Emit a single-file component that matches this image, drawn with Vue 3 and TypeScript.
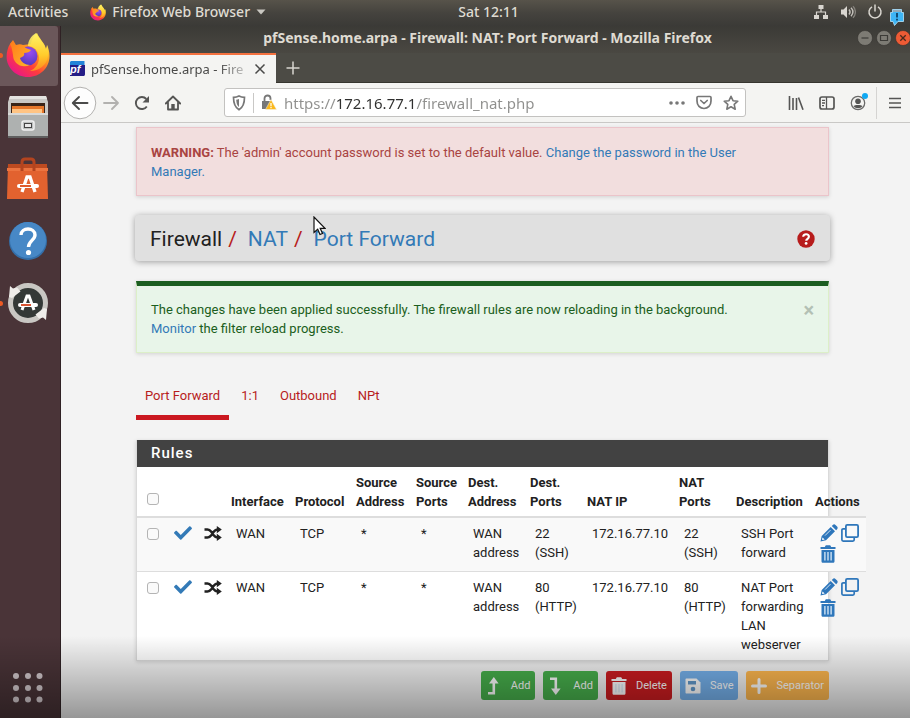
<script setup lang="ts">
import { ref } from 'vue'

interface Rule {
  id: number
  iface: string
  protocol: string
  srcAddr: string
  srcPorts: string
  destAddr: string
  destPorts: string
  natIp: string
  natPorts: string
  description: string
  selected: boolean
}

const tabs = ['Port Forward', '1:1', 'Outbound', 'NPt']
const activeTab = ref('Port Forward')
const noticeOpen = ref(true)
const allSelected = ref(false)
const url = ref('https://172.16.77.1/firewall_nat.php')

const headings = ['Interface', 'Protocol', 'Source Address', 'Source Ports', 'Dest. Address', 'Dest. Ports', 'NAT IP', 'NAT Ports', 'Description', 'Actions']

const rules = ref<Rule[]>([
  {
    id: 0, iface: 'WAN', protocol: 'TCP', srcAddr: '*', srcPorts: '*', destAddr: 'WAN address',
    destPorts: '22 (SSH)', natIp: '172.16.77.10', natPorts: '22 (SSH)', description: 'SSH Port forward', selected: false,
  },
  {
    id: 1, iface: 'WAN', protocol: 'TCP', srcAddr: '*', srcPorts: '*', destAddr: 'WAN address',
    destPorts: '80 (HTTP)', natIp: '172.16.77.10', natPorts: '80 (HTTP)', description: 'NAT Port forwarding LAN webserver', selected: false,
  },
])

function toggleAll() {
  rules.value.forEach((r) => { r.selected = allSelected.value })
}
</script>

<template>
  <div class="desktop">
    <svg class="sprite" width="0" height="0" aria-hidden="true">
      <defs>
        <linearGradient id="ffBody" x1="0.85" y1="0.1" x2="0.2" y2="0.95">
          <stop offset="0" stop-color="#fff04a" />
          <stop offset="0.35" stop-color="#ff9a1f" />
          <stop offset="0.65" stop-color="#ff3d3a" />
          <stop offset="1" stop-color="#e8178a" />
        </linearGradient>
        <linearGradient id="ffFlame" x1="0.5" y1="0" x2="0.6" y2="1">
          <stop offset="0" stop-color="#fff36a" />
          <stop offset="0.6" stop-color="#ffd02c" />
          <stop offset="1" stop-color="#ff8f1c" />
        </linearGradient>
        <linearGradient id="ffHead" x1="0" y1="0" x2="1" y2="1">
          <stop offset="0" stop-color="#ff7a1a" />
          <stop offset="1" stop-color="#ffb52a" />
        </linearGradient>
        <radialGradient id="ffGlobe" cx="0.6" cy="0.3" r="0.8">
          <stop offset="0" stop-color="#9a4df0" />
          <stop offset="1" stop-color="#4a37b8" />
        </radialGradient>
      </defs>
      <symbol id="firefox" viewBox="0 0 44 46">
        <path d="M4 12C2 15 .6 20 .6 24.500 .6 36 10 45 22 45s21.500-9 21.500-21c0-4-1-8-2.500-11 0 3-1 4-1 4-1-6-6-9-9-16-4 3-6 8-6 11L9 14 7 9z" fill="url(#ffBody)" />
        <path d="M30 1c-5 3-8 8-8 13 6 0 11 5 11 12 0 6-4 11-9 13 9 0 17-6 18-15 .5-4 0-8-1-11-.3 2-1 4-1.500 4C39 11 33 8 30 1z" fill="url(#ffFlame)" opacity=".9" />
        <circle cx="22" cy="24" r="9.500" fill="url(#ffGlobe)" />
        <path d="M4 12l3-4 3 5c3-1 5-1 7 0 1 2 4 4 8 5-1 2-4 3-7 3 1 2-1 4-4 5 1 4 5 7 10 7-9 4-17-2-17-10C6 18 6 15 4 12z" fill="url(#ffHead)" />
      </symbol>
      <symbol id="check" viewBox="0 0 512 400">
        <path fill="currentColor" d="M173.900 383.400l-166.400-166.400c-10-10-10-26.200 0-36.200l36.200-36.200c10-10 26.200-10 36.200 0L192 256.700 432.100 16.600c10-10 26.200-10 36.200 0l36.200 36.200c10 10 10 26.200 0 36.200l-294.400 294.400c-10 10-26.200 10-36.200 0z" />
      </symbol>
      <symbol id="shuffle" viewBox="0 0 18 15">
        <path d="M.5 3.500H3.500c1.800 0 2.800 1 3.800 2.300l2.400 3.400c1 1.300 2 2.300 3.800 2.300H14.500M.5 11.500H3.500c1.800 0 2.800-1 3.800-2.300l2.400-3.400c1-1.300 2-2.300 3.800-2.300H14.500" fill="none" stroke="currentColor" stroke-width="2.500" />
        <path d="M12.800 0l5 3.500-5 3.700zM12.800 7.800l5 3.700-5 3.500z" fill="currentColor" />
      </symbol>
      <symbol id="pencil" viewBox="0 0 18 18">
        <path d="M.5 17.500l1.200-5.600L10.700 3l4.300 4.300-9 9zM11.800 1.900l1-1c.8-.8 1.900-.8 2.700 0l1.600 1.600c.8.800.8 1.900 0 2.700l-1 1z" fill="currentColor" />
        <path d="M5 11.600l5.500-5.500" stroke="#cfe2f4" stroke-width="1" />
        <path d="M2.500 13.400l2.200 2.100-2 .5-.7-.6z" fill="#fff" />
      </symbol>
      <symbol id="clone" viewBox="0 0 18 18">
        <rect x="4.900" y=".9" width="12.200" height="12.200" rx="1.300" fill="none" stroke="currentColor" stroke-width="1.800" />
        <path d="M4 4.800H2.200c-.8 0-1.300.5-1.300 1.300v9.700c0 .8.500 1.300 1.300 1.300h9.700c.8 0 1.300-.5 1.300-1.300V14" fill="none" stroke="currentColor" stroke-width="1.700" />
      </symbol>
      <symbol id="trash" viewBox="0 0 16 18">
        <path d="M.5 2h4.300l1-1.700h4.400l1 1.700h4.300v2H.5zM1.500 5h13v11.200c0 1-.7 1.600-1.600 1.600H3.100c-.9 0-1.600-.6-1.600-1.600z" fill="currentColor" />
        <path d="M4.900 7v8.500M8 7v8.500M11.100 7v8.500" class="bars" />
      </symbol>
    </svg>

    <header class="panel-bar">
      <div class="panel-left">
        <button class="plain" type="button">Activities</button>
        <button class="plain app-menu" type="button">
          <svg width="16" height="17"><use href="#firefox" /></svg>
          Firefox Web Browser
          <svg width="10" height="6" viewBox="0 0 10 6"><path d="M.5.500h9L5 5.500z" fill="#c9c7c1" /></svg>
        </button>
      </div>
      <span class="clock">Sat 12:11</span>
      <div class="panel-right">
        <svg width="16" height="16" viewBox="0 0 16 16" fill="#d9d6d0"><path d="M5.500 1h5v4h-5zM1 11h5v4H1zM10 11h5v4h-5z" /><path d="M8 5v3M3.500 11V8h9v3" fill="none" stroke="#d9d6d0" stroke-width="1.200" /></svg>
        <svg width="16" height="16" viewBox="0 0 16 16"><path d="M1 5.500h2.500L7 2v12l-3.500-3.500H1z" fill="#d9d6d0" /><path d="M9 5.500c1.300 1.500 1.300 3.500 0 5M11 3.800c2.300 2.500 2.300 5.900 0 8.400" fill="none" stroke="#c4c1bb" stroke-width="1.400" /><path d="M13 2.300c3.200 3.300 3.200 8.100 0 11.400" fill="none" stroke="#85827c" stroke-width="1.300" /></svg>
        <svg width="16" height="16" viewBox="0 0 16 16" fill="none" stroke="#d9d6d0" stroke-width="1.500"><path d="M5 2.800a6 6 0 1 0 6 0M8 .5v7" /></svg>
        <svg class="bubble" width="14" height="17" viewBox="0 0 14 17"><path d="M2.500.500h9v3h2v9H8L4.500 16.500 3 12.500H.5v-9h2z" fill="#3eb5f5" stroke="#b8e6ff" stroke-width=".8" /><path d="M3 2h8" stroke="#93aab8" stroke-width="2" /><path d="M7 4v4.500M7 9.800v1.700" stroke="#0b3456" stroke-width="1.600" /></svg>
      </div>
    </header>

    <div class="workspace">
      <nav class="dock" aria-label="Dock">
        <button class="dock-item active running" type="button" aria-label="Firefox">
          <svg width="44" height="46"><use href="#firefox" /></svg>
        </button>
        <button class="dock-item" type="button" aria-label="Files">
          <svg width="42" height="44" viewBox="0 0 42 44">
            <path d="M3 1h36l2 6v12H1V7z" fill="#c9c8c5" /><path d="M3 1h36l1 3H2z" fill="#e4e3e0" />
            <path d="M4 8h34v11H4z" fill="#3a2418" /><path d="M5 11h32v7H5z" fill="#e5772b" /><path d="M5 14h30v4H5z" fill="#ffc483" />
            <path d="M1 18h40v23H1z" fill="#aeb1b0" /><path d="M1 18h40v2H1z" fill="#d8d9d8" /><path d="M1 41h40v2H1z" fill="#5f5f5f" />
            <rect x="15" y="26" width="12" height="9" rx="2" fill="#bfc2c1" stroke="#f1f1f1" stroke-width="1.500" /><rect x="17.500" y="28.500" width="7" height="4" fill="#e9e9e9" stroke="#444" />
          </svg>
        </button>
        <button class="dock-item" type="button" aria-label="Ubuntu Software">
          <svg width="42" height="44" viewBox="0 0 42 44">
            <path d="M1 7h39l1 35H0z" fill="#e2622f" /><path d="M1 7h39v5H1z" fill="#bd4a20" /><path d="M0 11h41v3H0z" fill="#ec7440" />
            <path d="M15 14V5c0-2 1.500-3 3-3h6c1.500 0 3 1 3 3v9" fill="none" stroke="#b3441f" stroke-width="3" />
            <path d="M15 35l5-15h3l5 15" fill="none" stroke="#fff" stroke-width="3.300" /><path d="M12 29h18" stroke="#fff" stroke-width="4" stroke-linecap="round" /><path d="M13 29h11" stroke="#dd4814" stroke-width="1.800" />
          </svg>
        </button>
        <button class="dock-item" type="button" aria-label="Help">
          <svg width="40" height="40" viewBox="0 0 40 40">
            <circle cx="20" cy="20" r="19" fill="#346fa9" /><circle cx="20" cy="19" r="18" fill="#4788c6" />
            <path d="M13 14c0-8 14-8 14 0 0 5-6.500 6-6.500 12" fill="none" stroke="#fff" stroke-width="3.400" /><circle cx="20.500" cy="31.500" r="2.600" fill="#fff" />
          </svg>
        </button>
        <button class="dock-item running" type="button" aria-label="Software Updater">
          <svg width="42" height="44" viewBox="0 0 42 44">
            <circle cx="21" cy="22" r="17.500" fill="#343937" stroke="#c9c7c3" stroke-width="5" />
            <path d="M3 5l3 2.500 4-1 3.500 4L5 17l-3-1zM39 39l-3-2.500-4 1-3.500-4L37 27l3 1z" fill="#efedea" />
            <path d="M15 29l5-14h2l5 14" fill="none" stroke="#fff" stroke-width="3" /><path d="M13 24h16" stroke="#fff" stroke-width="4" stroke-linecap="round" /><path d="M14 24h10" stroke="#d5421c" stroke-width="1.800" />
          </svg>
        </button>
        <button class="dock-apps" type="button" aria-label="Show Applications">
          <svg width="32" height="32" viewBox="0 0 32 32" fill="#d5cbcf">
            <circle cx="4" cy="4" r="3" /><circle cx="16" cy="4" r="3" /><circle cx="27.500" cy="4" r="3" />
            <circle cx="4" cy="16" r="3" /><circle cx="16" cy="16" r="3" /><circle cx="27.500" cy="16" r="3" />
            <circle cx="4" cy="27.500" r="3" /><circle cx="16" cy="27.500" r="3" /><circle cx="27.500" cy="27.500" r="3" />
          </svg>
        </button>
      </nav>

      <div class="window">
        <div class="titlebar">
          <span class="window-title">pfSense.home.arpa - Firewall: NAT: Port Forward - Mozilla Firefox</span>
          <div class="window-controls">
            <button class="plain" type="button" aria-label="Minimize"><svg width="16" height="16" viewBox="0 0 16 16"><circle cx="8" cy="8" r="7.500" fill="#7d7b74" stroke="#33312d" stroke-width=".6" /><path d="M4.500 8h7" stroke="#3c3b37" stroke-width="1.200" /></svg></button>
            <button class="plain" type="button" aria-label="Maximize"><svg width="16" height="16" viewBox="0 0 16 16"><circle cx="8" cy="8" r="7.500" fill="#7d7b74" stroke="#33312d" stroke-width=".6" /><path d="M4.500 5.500h7v5h-7z" fill="none" stroke="#3c3b37" stroke-width="1.200" /></svg></button>
            <button class="plain" type="button" aria-label="Close"><svg width="16" height="16" viewBox="0 0 16 16"><circle cx="8" cy="8" r="7.500" fill="#ee5b35" stroke="#33312d" stroke-width=".6" /><path d="M5.300 5.300l5.400 5.400M10.700 5.300l-5.400 5.400" stroke="#4a2a1c" stroke-width="1.300" /></svg></button>
          </div>
        </div>

        <div class="tabstrip">
          <div class="tab">
            <svg class="favicon" width="15" height="15" viewBox="0 0 15 15">
              <path d="M1 0h13.500v5H0V1z" fill="#2383d8" /><path d="M0 4h15v9c0 1.500-.5 2-2 2H0z" fill="#241d86" />
              <text x="0" y="11.500">pf</text>
            </svg>
            <span class="tab-title">pfSense.home.arpa - Fire</span>
            <button class="plain" type="button" aria-label="Close tab"><svg width="12" height="12" viewBox="0 0 12 12"><path d="M1.500 1.500l9 9M10.500 1.500l-9 9" stroke="#4a4a49" stroke-width="1.500" /></svg></button>
          </div>
          <button class="plain new-tab" type="button" aria-label="New tab"><svg width="14" height="14" viewBox="0 0 14 14"><path d="M7 .5v13M.5 7h13" stroke="#d8d6d0" stroke-width="1.500" /></svg></button>
        </div>

        <div class="toolbar">
          <button class="tool back" type="button" aria-label="Back"><svg width="34" height="34" viewBox="0 0 34 34"><circle cx="17" cy="17" r="15.800" fill="#fdfdfd" stroke="#b3b2b0" /><path d="M10 17h14.500M16 11l-6.200 6 6.200 6" fill="none" stroke="#4a4a49" stroke-width="1.900" stroke-linecap="round" stroke-linejoin="round" /></svg></button>
          <button class="tool" type="button" aria-label="Forward"><svg width="16" height="14" viewBox="0 0 16 14"><path d="M1 7h14M9 1l6 6-6 6" fill="none" stroke="#b2b1af" stroke-width="1.800" stroke-linecap="round" stroke-linejoin="round" /></svg></button>
          <button class="tool" type="button" aria-label="Reload"><svg width="16" height="16" viewBox="0 0 16 16"><path d="M12.800 11.500a6 6 0 1 1-.5-7.500" fill="none" stroke="#555554" stroke-width="1.900" /><path d="M15 1v6.500H8.500z" fill="#555554" /></svg></button>
          <button class="tool" type="button" aria-label="Home"><svg width="16" height="16" viewBox="0 0 16 16"><path d="M.8 8.500L8 1.500l7.200 7M3 7.500V14.500h10V7.500" fill="none" stroke="#555554" stroke-width="1.800" stroke-linecap="round" stroke-linejoin="round" /><path d="M6.300 9h3.400v5H6.300z" fill="#555554" /></svg></button>

          <div class="urlbar">
            <svg width="14" height="16" viewBox="0 0 14 16"><path d="M1.500 2.300C4 2.300 5.500 1.800 7 1c1.500.8 3 1.300 5.500 1.300C12.500 9 11 12.500 7 14.800 3 12.500 1.500 9 1.500 2.300z" fill="none" stroke="#777" stroke-width="1.700" /><path d="M7 4c-1 .5-1.800.7-2.800.8C4.500 8.500 5 10.500 7 12z" fill="#777" /></svg>
            <span class="divider"></span>
            <svg width="16" height="17" viewBox="0 0 16 17"><path d="M3.500 7V4.500c0-4 6-4 6 0V6" fill="none" stroke="#777" stroke-width="1.800" /><path d="M1 7h10v8H1z" fill="#777" /><path d="M10 5.500l5.500 10h-11z" fill="#fbb81c" stroke="#f3f3f1" stroke-width=".5" /><path d="M10 9v3.300M10 13v1.300" stroke="#fff" stroke-width="1.200" /></svg>
            <input v-model="url" class="address" type="text" aria-label="Address" spellcheck="false">
            <button class="plain" type="button" aria-label="Page actions"><svg width="16" height="4" viewBox="0 0 16 4" fill="#777"><circle cx="2" cy="2" r="1.800" /><circle cx="8" cy="2" r="1.800" /><circle cx="14" cy="2" r="1.800" /></svg></button>
            <button class="plain" type="button" aria-label="Save to Pocket"><svg width="16" height="15" viewBox="0 0 16 15" fill="none" stroke="#777" stroke-width="1.700" stroke-linecap="round" stroke-linejoin="round"><path d="M2 1.500h12c.6 0 1 .4 1 1V6c0 4.500-3 7.500-7 7.500S1 10.500 1 6V2.500c0-.6.4-1 1-1z" /><path d="M4.800 5.500L8 8.500l3.200-3" /></svg></button>
            <button class="plain" type="button" aria-label="Bookmark"><svg width="16" height="16" viewBox="0 0 16 16"><path d="M8 1.300l2 4.400 4.800.5-3.600 3.200 1 4.800L8 11.800l-4.200 2.400 1-4.800L1.200 6.200 6 5.700z" fill="none" stroke="#777" stroke-width="1.600" stroke-linejoin="round" /></svg></button>
          </div>

          <button class="tool" type="button" aria-label="Library"><svg width="16" height="14" viewBox="0 0 16 14"><path d="M1.500 0v14M5 2v12M8.500 2v12M10.500 1.500L15 13.700" stroke="#555554" stroke-width="1.600" /></svg></button>
          <button class="tool" type="button" aria-label="Sidebars"><svg width="16" height="14" viewBox="0 0 16 14"><rect x="1" y="1" width="14" height="12" rx="2" fill="none" stroke="#555554" stroke-width="1.700" /><path d="M7.500 1v12M3 4.300h3M3 7h3M3 9.700h2" stroke="#555554" stroke-width="1.300" /></svg></button>
          <button class="tool account" type="button" aria-label="Account"><svg width="16" height="16" viewBox="0 0 16 16"><circle cx="8" cy="8" r="6.700" fill="none" stroke="#6a6a69" stroke-width="1.300" /><circle cx="8" cy="6.300" r="2.800" fill="#555554" /><path d="M3.500 11c1-1.500 8-1.500 9 0-2 3-7 3-9 0z" fill="#555554" /></svg></button>
          <span class="toolbar-rule"></span>
          <button class="tool" type="button" aria-label="Menu"><svg width="12" height="12" viewBox="0 0 12 12"><path d="M0 1.500h12M0 6h12M0 10.500h12" stroke="#555554" stroke-width="1.600" /></svg></button>
        </div>

        <main class="page">
          <div class="alert danger">
            <strong>WARNING:</strong> The 'admin' account password is set to the default value.
            <a href="#password">Change the password in the User<br>Manager.</a>
          </div>

          <div class="page-head">
            <h1 class="crumbs">Firewall<span class="slash">/</span><a href="#nat">NAT</a><span class="slash">/</span><a href="#forward">Port Forward</a></h1>
            <a class="help" href="#help" aria-label="Help for items on this page">
              <svg width="18" height="18" viewBox="0 0 18 18"><circle cx="9" cy="9" r="8.700" fill="#b71c1c" /><path d="M6.200 6.800c0-3.400 5.700-3.300 5.700 0 0 2-2.700 2-2.700 4" fill="none" stroke="#fff" stroke-width="2.100" /><circle cx="9.100" cy="13.400" r="1.400" fill="#fff" /></svg>
            </a>
          </div>

          <div v-if="noticeOpen" class="alert success">
            <p>The changes have been applied successfully. The firewall rules are now reloading in the background.<br><a href="#monitor">Monitor</a> the filter reload progress.</p>
            <button class="dismiss" type="button" aria-label="Dismiss" @click="noticeOpen = false">×</button>
          </div>

          <ul class="tabs">
            <li v-for="t in tabs" :key="t">
              <a href="#tab" :class="{ current: t === activeTab }" @click.prevent="activeTab = t">{{ t }}</a>
            </li>
          </ul>

          <section class="rules">
            <h2>Rules</h2>
            <table>
              <colgroup>
                <col class="c-check"><col class="c-state"><col class="c-link"><col class="c-iface"><col class="c-proto"><col class="c-src"><col class="c-sport"><col class="c-dest"><col class="c-dport"><col class="c-ip"><col class="c-nport"><col class="c-desc"><col class="c-act">
              </colgroup>
              <thead>
                <tr>
                  <th class="pick"><input v-model="allSelected" type="checkbox" aria-label="Select all rules" @change="toggleAll"></th>
                  <th></th>
                  <th></th>
                  <th v-for="h in headings" :key="h" scope="col">{{ h }}</th>
                </tr>
              </thead>
              <tbody>
                <tr v-for="r in rules" :key="r.id">
                  <td class="pick"><input v-model="r.selected" type="checkbox" :aria-label="'Select rule ' + r.description"></td>
                  <td class="state"><a href="#toggle" aria-label="Toggle rule"><svg width="18" height="14"><use href="#check" /></svg></a></td>
                  <td class="linked"><svg width="18" height="15"><use href="#shuffle" /></svg></td>
                  <td>{{ r.iface }}</td>
                  <td>{{ r.protocol }}</td>
                  <td>{{ r.srcAddr }}</td>
                  <td>{{ r.srcPorts }}</td>
                  <td>{{ r.destAddr }}</td>
                  <td>{{ r.destPorts }}</td>
                  <td>{{ r.natIp }}</td>
                  <td>{{ r.natPorts }}</td>
                  <td>{{ r.description }}</td>
                  <td>
                    <div class="actions">
                      <a href="#edit" aria-label="Edit rule"><svg width="18" height="18"><use href="#pencil" /></svg></a>
                      <a href="#copy" aria-label="Copy rule"><svg width="18" height="18"><use href="#clone" /></svg></a>
                      <a href="#delete" aria-label="Delete rule"><svg width="16" height="18"><use href="#trash" /></svg></a>
                    </div>
                  </td>
                </tr>
              </tbody>
            </table>
          </section>

          <div class="buttons">
            <button class="btn add" type="button"><svg width="12" height="18" viewBox="0 0 12 18"><path d="M1 16.300h5.800V4" fill="none" stroke="#fff" stroke-width="2.600" /><path d="M2 6.500L6.800 0l4.800 6.500z" fill="#fff" /></svg>Add</button>
            <button class="btn add" type="button"><svg width="12" height="18" viewBox="0 0 12 18"><path d="M1 1.700h5.800V14" fill="none" stroke="#fff" stroke-width="2.600" /><path d="M2 11.500L6.800 18l4.800-6.500z" fill="#fff" /></svg>Add</button>
            <button class="btn delete" type="button"><svg width="16" height="18"><use href="#trash" /></svg>Delete</button>
            <button class="btn save" type="button"><svg width="16" height="16" viewBox="0 0 16 16"><path d="M1.500.500h10L15.500 4.500v10c0 .6-.4 1-1 1h-13c-.6 0-1-.4-1-1v-13c0-.6.4-1 1-1z" fill="#fff" /><path d="M3 3h8v3.500H3z" fill="#6299cb" /><circle cx="8" cy="11" r="2.300" fill="#6299cb" /></svg>Save</button>
            <button class="btn separator" type="button"><svg width="16" height="16" viewBox="0 0 16 16"><path d="M8 1.500v13M1.500 8h13" stroke="#fff" stroke-width="3" stroke-linecap="round" /></svg>Separator</button>
          </div>
        </main>
      </div>
    </div>

    <svg class="cursor" width="13" height="20" viewBox="0 0 13 20" aria-hidden="true"><path d="M1 1v15.500l3.700-3.300 2.300 5.300 2.500-1-2.300-5.200H12z" fill="#fff" stroke="#111" stroke-width="1.200" /></svg>
    <div class="shade"></div>
  </div>
</template>

<style>
body {
  margin: 0;
  background: #f3f3f3;
}
</style>

<style scoped>
* {
  box-sizing: border-box;
}

.desktop {
  position: relative;
  display: flex;
  flex-direction: column;
  min-height: 100vh;
  overflow: hidden;
  font: 14px/20px "Noto Sans", "Open Sans", sans-serif;
  color: #dfdbd2;
}

.sprite {
  position: absolute;
}

button {
  font: inherit;
  color: inherit;
}

svg {
  display: block;
  flex: none;
}

.plain {
  display: flex;
  align-items: center;
  padding: 0;
  border: 0;
  background: none;
}

.bars {
  stroke: #dcebf8;
  stroke-width: 1.300;
}

/* top panel */
.panel-bar {
  display: grid;
  grid-template-columns: minmax(0, 450fr) auto minmax(0, 384fr);
  align-items: center;
  height: 26px;
  padding: 0 7px 2px 8px;
  background: linear-gradient(#57534a, #45433e 50%, #3b3a37);
  font-weight: 500;
}

.panel-left,
.panel-right {
  display: flex;
  align-items: center;
  white-space: nowrap;
}

.panel-left {
  gap: 22px;
}

.app-menu {
  gap: 6px;
}

.panel-right {
  justify-content: flex-end;
  gap: 11px;
}

.bubble {
  position: relative;
  top: 5px;
  margin-left: -4px;
  margin-right: -1px;
}

.workspace {
  display: flex;
  flex: 1;
}

/* dock */
.dock {
  display: flex;
  flex: none;
  flex-direction: column;
  align-items: flex-start;
  gap: 2px;
  width: 61px;
  padding-bottom: 14px;
  border-right: 1px solid #2f2124;
  background: #4a3438;
}

.dock-item {
  position: relative;
  display: flex;
  align-items: center;
  justify-content: center;
  width: 58px;
  height: 60px;
  padding: 0 2px 2px 0;
  border: 0;
  background: none;
}

.dock-item.active {
  border-radius: 0 3px 3px 0;
  background: #6b575a;
}

.dock-item.running::before {
  content: "";
  position: absolute;
  left: -2px;
  top: 27px;
  width: 5px;
  height: 5px;
  border-radius: 50%;
  background: #ee5a24;
}

.dock-apps {
  margin: auto 0 0 12px;
  padding: 0;
  border: 0;
  background: none;
}

/* browser chrome */
.window {
  display: flex;
  flex: 1;
  flex-direction: column;
  min-width: 0;
  background: #f3f3f3;
}

.titlebar {
  display: grid;
  grid-template-columns: 1fr auto 1fr;
  align-items: center;
  height: 27px;
  padding-bottom: 4px;
  background: linear-gradient(#3b3a36, #4a4842);
}

.window-title {
  grid-column: 2;
  padding-left: 4px;
  font-weight: 700;
}

.window-controls {
  display: flex;
  justify-content: flex-end;
  gap: 3px;
  margin-right: -1px;
}

.tabstrip {
  display: flex;
  height: 30px;
  border-bottom: 1px solid #36352f;
  background: #4c4b45;
}

.tab {
  display: flex;
  align-items: center;
  width: 215px;
  height: 31px;
  padding: 0 10px 2px 9px;
  border-top: 2px solid #f4713f;
  background: #f4f4f2;
  color: #4a4a49;
  font-size: 13px;
}

.favicon text {
  fill: #fff;
  font: italic 700 11px "Liberation Sans", sans-serif;
}

.tab-title {
  flex: 1;
  margin: 0 7px 0 6px;
  white-space: nowrap;
  mask-image: linear-gradient(to right, #000 82%, transparent 105%);
}

.new-tab {
  margin-left: 10px;
}

.toolbar {
  display: flex;
  align-items: center;
  height: 40px;
  padding-left: 3px;
  border-bottom: 1px solid #c9c8c6;
  background: #f4f4f2;
  color: #484847;
}

.tool {
  position: relative;
  display: flex;
  flex: none;
  align-items: center;
  justify-content: center;
  width: 31px;
  height: 34px;
  padding: 0;
  border: 0;
  background: none;
}

.account::after {
  content: "";
  position: absolute;
  right: 5px;
  top: 7px;
  width: 6px;
  height: 6px;
  border-radius: 50%;
  background: #10a8f2;
}

.toolbar-rule {
  width: 1px;
  height: 32px;
  margin: 0 2px 0 3px;
  background: #d5d4d2;
}

.urlbar {
  display: flex;
  flex: 1;
  align-items: center;
  gap: 11px;
  min-width: 0;
  height: 29px;
  margin: 0 34px 0 36px;
  padding: 0 6px 0 7px;
  border: 1px solid #c3c2c0;
  border-radius: 3px;
  background: #fff;
}

.divider {
  width: 1px;
  height: 20px;
  margin: 0 -4px;
  background: #c9c8c6;
}

.address {
  flex: 1;
  min-width: 0;
  margin-left: -4px;
  padding: 0;
  border: 0;
  outline: 0;
  background: linear-gradient(to right, #8f8f8d 52px, #2f2f2e 52px, #2f2f2e 132px, #8f8f8d 132px);
  background-clip: text;
  -webkit-text-fill-color: transparent;
  font: 15px/20px "Noto Sans", "Open Sans", sans-serif;
}

/* pfSense page */
.page {
  flex: 1;
  padding: 4px 81px 16px 75px;
  font: 13px/19px Roboto, sans-serif;
  color: #212121;
}

a {
  color: #337ab7;
  text-decoration: none;
}

.alert {
  padding: 15px 14px 14px;
  box-shadow: 0 1px 4px rgba(0, 0, 0, .14);
}

.danger {
  border: 1px solid #ebc4ca;
  background: #f2dede;
  color: #a94442;
}

.page-head {
  display: flex;
  align-items: center;
  justify-content: space-between;
  height: 46px;
  margin: 19px -1px 20px;
  padding: 1px 15px 0;
  border-radius: 4px;
  background: #e0e0e0;
  box-shadow: 0 1px 6px rgba(0, 0, 0, .35);
}

.crumbs {
  margin: 0;
  font-size: 21px;
  font-weight: 400;
  line-height: 28px;
}

.slash {
  margin: 0 11px 0 6px;
  color: #b71c1c;
}

.success {
  display: flex;
  justify-content: space-between;
  padding-top: 14px;
  border: 1px solid #dcefc8;
  border-top: 5px solid #1b5e20;
  background: #e8f5e9;
  color: #1b5e20;
}

.success p {
  margin: 0;
}

.dismiss {
  align-self: flex-start;
  padding: 0;
  border: 0;
  background: none;
  color: #b3c0b4;
  font-size: 20px;
  font-weight: 700;
  line-height: 20px;
}

.tabs {
  display: flex;
  gap: 3px;
  margin: 33px 0 20px;
  padding: 0;
  list-style: none;
}

.tabs a {
  display: block;
  padding: 0 9px 10px;
  border-bottom: 5px solid transparent;
  color: #b71c1c;
}

.tabs .current {
  border-color: #cb1820;
}

.rules {
  border: 1px solid #dadada;
  border-top: 0;
  background: #fff;
  box-shadow: 0 1px 4px rgba(0, 0, 0, .15);
}

.rules h2 {
  margin: 0;
  padding: 4px 14px;
  background: #424242;
  color: #fff;
  font-size: 15px;
  font-weight: 500;
  letter-spacing: 1px;
  line-height: 19px;
}

table {
  width: 729px;
  border-collapse: collapse;
  table-layout: fixed;
}

.c-check { width: 27px; }
.c-state { width: 30px; }
.c-link { width: 32px; }
.c-iface { width: 64px; }
.c-proto { width: 61px; }
.c-src { width: 60px; }
.c-sport { width: 52px; }
.c-dest { width: 62px; }
.c-dport { width: 57px; }
.c-ip { width: 92px; }
.c-nport { width: 57px; }
.c-desc { width: 79px; }
.c-act { width: 56px; }

th {
  padding: 6px 0 5px 5px;
  border-bottom: 2px solid #ddd;
  font-weight: 700;
  text-align: left;
  vertical-align: bottom;
}

td {
  padding: 6px 0 6px 10px;
  border-top: 1px solid #ddd;
  vertical-align: top;
}

tbody tr:nth-child(odd) {
  background: #f9f9f9;
}

.pick {
  padding-left: 10px;
}

input[type="checkbox"] {
  appearance: none;
  display: block;
  width: 12px;
  height: 12px;
  margin: 4px 0 6px;
  border: 1px solid #b4b4b4;
  border-radius: 3px;
  background: #fafafa;
}

input[type="checkbox"]:checked {
  background: #337ab7;
}

.state svg,
.linked svg {
  margin-top: 2px;
}

.actions {
  display: flex;
  flex-wrap: wrap;
  gap: 3px;
  padding-bottom: 2px;
}

.actions a {
  color: #2f77bb;
}

.buttons {
  display: flex;
  justify-content: flex-end;
  gap: 8px;
  margin-top: 10px;
}

.btn {
  display: flex;
  align-items: center;
  height: 29px;
  gap: 9px;
  padding: 0 5px;
  border: 0;
  border-radius: 3px;
  color: #fff;
  font-size: 11px;
  line-height: 18px;
}

.add {
  gap: 12px;
  padding-left: 6px;
  background: #47b04c;
}

.delete {
  background: #cc1c20;
}

.delete .bars {
  stroke: #cc1c20;
}

.save {
  background: #75b1ec;
}

.separator {
  background: #ffb84f;
}

.cursor {
  position: absolute;
  left: 313px;
  top: 216px;
}

.shade {
  position: absolute;
  inset: auto 0 0;
  height: 82px;
  background: linear-gradient(transparent, rgba(0, 0, 0, .38));
  pointer-events: none;
}
</style>
